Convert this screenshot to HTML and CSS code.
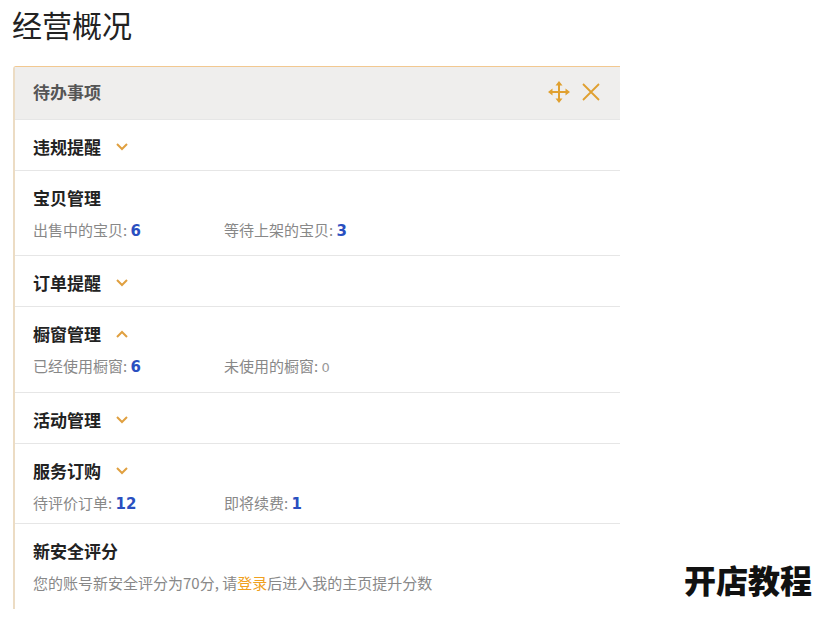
FILE: index.html
```html
<!DOCTYPE html>
<html lang="zh-CN">
<head>
    <meta charset="UTF-8">
    <meta name="viewport" content="width=device-width, initial-scale=1.0">
    <title>经营概况</title>
    <link rel="stylesheet" href="styles.css">
</head>
<body>
    <h1 class="page-title">经营概况</h1>

    <div class="main">
        <!-- 待办事项面板 -->
        <div class="panel">
            <div class="panel-head">
                <span class="panel-title">待办事项</span>
                <div class="panel-tools">
                    <svg class="icon-move" width="24" height="24" viewBox="0 0 24 24">
                        <path d="M12 4v16M4 12h16" stroke="#e0a030" stroke-width="2" fill="none"/>
                        <path d="M12 1l-3.5 4.5h7z M12 23l-3.5-4.5h7z M1 12l4.5-3.5v7z M23 12l-4.5-3.5v7z" fill="#e0a030"/>
                    </svg>
                    <svg class="icon-close" width="20" height="20" viewBox="0 0 20 20">
                        <path d="M2 2l16 16M18 2L2 18" stroke="#e0a030" stroke-width="1.8" fill="none"/>
                    </svg>
                </div>
            </div>

            <div class="row">
                <div class="row-title">违规提醒
                    <svg class="chev" width="12" height="8" viewBox="0 0 12 8"><polyline points="1,1 6,6 11,1"/></svg>
                </div>
            </div>

            <div class="row">
                <div class="row-title">宝贝管理</div>
                <div class="stats">
                    <div class="stat">出售中的宝贝: <b>6</b></div>
                    <div class="stat">等待上架的宝贝: <b>3</b></div>
                </div>
            </div>

            <div class="row">
                <div class="row-title">订单提醒
                    <svg class="chev" width="12" height="8" viewBox="0 0 12 8"><polyline points="1,1 6,6 11,1"/></svg>
                </div>
            </div>

            <div class="row">
                <div class="row-title">橱窗管理
                    <svg class="chev" width="12" height="8" viewBox="0 0 12 8"><polyline points="1,7 6,2 11,7"/></svg>
                </div>
                <div class="stats">
                    <div class="stat">已经使用橱窗: <b>6</b></div>
                    <div class="stat">未使用的橱窗: <span class="zero">0</span></div>
                </div>
            </div>

            <div class="row">
                <div class="row-title">活动管理
                    <svg class="chev" width="12" height="8" viewBox="0 0 12 8"><polyline points="1,1 6,6 11,1"/></svg>
                </div>
            </div>

            <div class="row tight">
                <div class="row-title">服务订购
                    <svg class="chev" width="12" height="8" viewBox="0 0 12 8"><polyline points="1,1 6,6 11,1"/></svg>
                </div>
                <div class="stats">
                    <div class="stat">待评价订单: <b>12</b></div>
                    <div class="stat">即将续费: <b>1</b></div>
                </div>
            </div>

            <div class="row last">
                <div class="row-title">新安全评分</div>
                <div class="stats">
                    <div class="note">您的账号新安全评分为70分, 请<a href="#">登录</a>后进入我的主页提升分数</div>
                </div>
            </div>
        </div>

        <div class="aside">开店教程</div>
    </div>
</body>
</html>
```

FILE: styles.css
```css
body {
    margin: 0;
    font-family: "Noto Sans CJK SC", "Noto Sans", sans-serif;
    color: #222;
    background-color: #fff;
    overflow: hidden;
}

.page-title {
    margin: 0;
    padding: 4px 0 0 12px;
    font-size: 30px;
    font-weight: 400;
    line-height: 40px;
    color: #222;
}

.main {
    display: flex;
    margin-top: 22px;
    margin-left: 13px;
}

.panel {
    width: 605px;
    flex-shrink: 0;
    border-left: 2px solid #ecdcc4;
    border-top: 1px solid #f2c890;
    border-top-left-radius: 3px;
}

.panel-head {
    display: flex;
    justify-content: space-between;
    align-items: center;
    height: 52px;
    padding: 0 18px;
    background-color: #efeeed;
    border-bottom: 1px solid #e6e6e6;
}

.panel-title {
    font-size: 17px;
    font-weight: 700;
    line-height: 22px;
    margin-top: -3px;
    color: #555;
}

.panel-tools {
    display: flex;
    align-items: center;
    gap: 10px;
    margin-right: 1px;
    margin-top: -2px;
}

.row {
    padding: 16px 18px 12px;
    border-bottom: 1px solid #e6e6e6;
}

.row .stats {
    margin-top: 10px;
    margin-bottom: 1px;
}

.row.tight {
    padding-bottom: 7px;
}

.row.last {
    border-bottom: none;
    padding-bottom: 14px;
}

.row-title {
    display: flex;
    align-items: center;
    font-size: 17px;
    font-weight: 700;
    line-height: 22px;
    color: #222;
}

.chev {
    margin-left: 15px;
    fill: none;
    stroke: #e0a040;
    stroke-width: 2;
}

.stats {
    display: flex;
    line-height: 22px;
    font-size: 15px;
    color: #888;
}

.stat {
    width: 191px;
}

.stat b {
    font-family: "DejaVu Sans", sans-serif;
    font-size: 15px;
    color: #2a4fc0;
}

.zero {
    font-family: "DejaVu Sans", sans-serif;
    font-size: 13px;
    color: #999;
}

.note {
    font-size: 15px;
}

.note a {
    color: #f0a020;
    text-decoration: none;
}

.aside {
    align-self: flex-end;
    margin-left: 64px;
    margin-bottom: 12px;
    font-size: 32px;
    font-weight: 900;
    line-height: 36px;
    white-space: nowrap;
    color: #111;
}
```
